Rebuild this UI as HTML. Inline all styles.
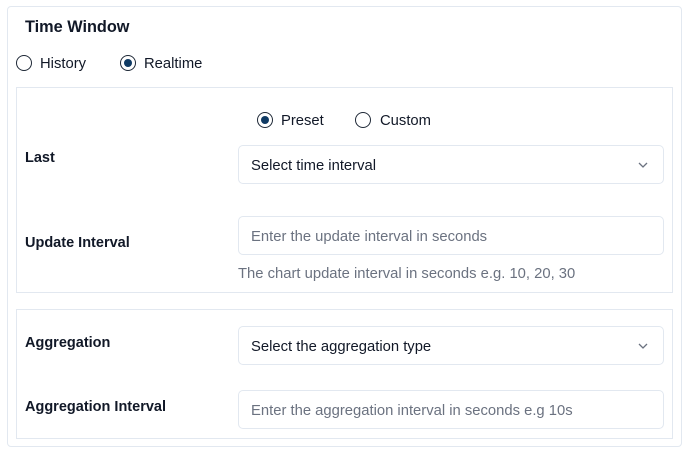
<!DOCTYPE html>
<html><head><style>
*{box-sizing:border-box;margin:0;padding:0}
body{width:692px;height:455px;background:#fff;font-family:"Liberation Sans",sans-serif;color:#111827;position:relative;overflow:hidden}
.a{position:absolute}
.card{left:7px;top:6px;width:675px;height:441px;border:1px solid #e2e8f0;border-radius:4px}
.box{border:1px solid #e2e8f0}
.t{font-size:14.8px;white-space:nowrap}
.lab{font-size:14.5px;font-weight:600;color:#111827}
.in{left:238px;width:426px;height:39px;border:1px solid #e2e8f0;border-radius:5px;font-size:14.8px;padding:2px 12px 0;line-height:37px;white-space:nowrap}
.ph{color:#6b7280}
.r{width:16px;height:16px;border:1.5px solid #1f2937;border-radius:50%}
.r.on::after{content:"";position:absolute;left:2.5px;top:2.5px;width:8px;height:8px;border-radius:50%;background:#0f3a63}
.chev{position:absolute;right:14px;top:13px}
</style></head><body>
<div class="a card"></div>
<div class="a" style="left:25px;top:18px;font-size:16.3px;font-weight:bold">Time Window</div>
<div class="a r" style="left:16px;top:55px"></div><div class="a t" style="left:40px;top:56px">History</div>
<div class="a r on" style="left:120px;top:55px"></div><div class="a t" style="left:144px;top:56px">Realtime</div>
<div class="a box" style="left:16px;top:87px;width:657px;height:206px"></div>
<div class="a r on" style="left:257px;top:112px"></div><div class="a t" style="left:281px;top:113px">Preset</div>
<div class="a r" style="left:355px;top:112px"></div><div class="a t" style="left:380px;top:113px">Custom</div>
<div class="a lab" style="left:25px;top:150px">Last</div>
<div class="a in" style="top:145px">Select time interval<svg class="chev" width="12" height="12" viewBox="0 0 12 12"><path d="M2 4l4 4 4-4" fill="none" stroke="#6b7280" stroke-width="1.3"/></svg></div>
<div class="a lab" style="left:25px;top:235px">Update Interval</div>
<div class="a in ph" style="top:216px">Enter the update interval in seconds</div>
<div class="a t ph" style="left:238px;top:266px">The chart update interval in seconds e.g. 10, 20, 30</div>
<div class="a box" style="left:16px;top:309px;width:657px;height:130px"></div>
<div class="a lab" style="left:25px;top:335px">Aggregation</div>
<div class="a in" style="top:326px">Select the aggregation type<svg class="chev" width="12" height="12" viewBox="0 0 12 12"><path d="M2 4l4 4 4-4" fill="none" stroke="#6b7280" stroke-width="1.3"/></svg></div>
<div class="a lab" style="left:25px;top:399px">Aggregation Interval</div>
<div class="a in ph" style="top:390px">Enter the aggregation interval in seconds e.g 10s</div>
</body></html>
